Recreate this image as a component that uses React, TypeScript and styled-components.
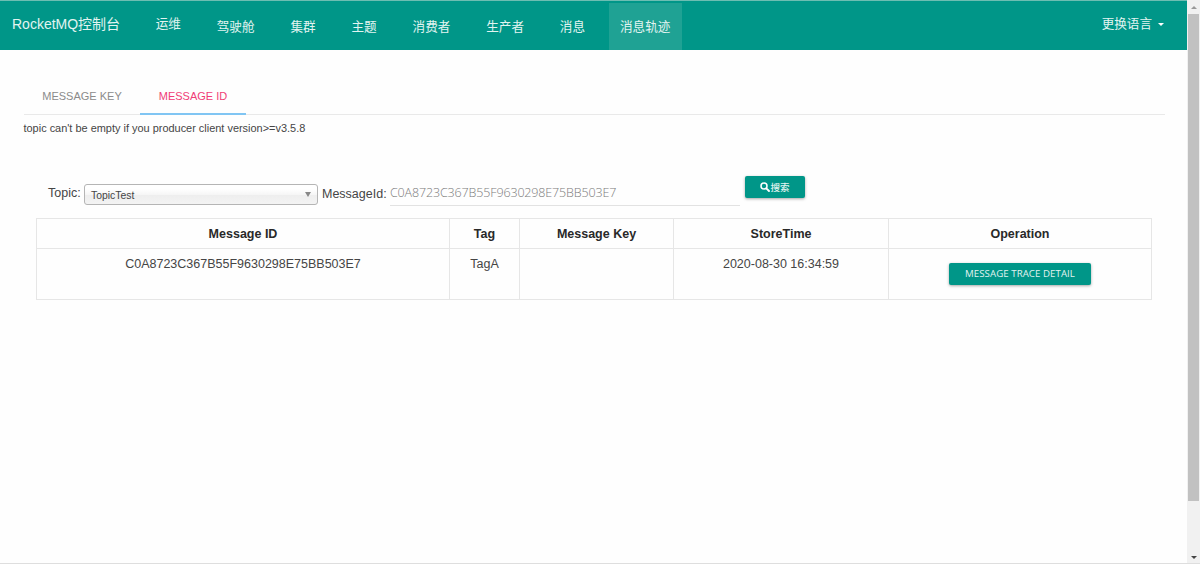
import React from "react";
import styled, { createGlobalStyle, css } from "styled-components";

const teal = "#009688";
const line = "#e6e6e6";

const GlobalStyle = createGlobalStyle`
  *, *::before, *::after { box-sizing: border-box; }
  body {
    margin: 0;
    overflow: hidden;
    background: #fefefe;
    color: #454545;
    font: 12.5px/18px "Liberation Sans", Arial, "Noto Sans CJK SC", sans-serif;
  }
`;

const Window = styled.div`
  display: flex;
  width: 1200px;
  height: 564px;
  border-bottom: 1px solid #dedede;
`;

const Page = styled.div`
  flex: 0 0 1187px;
`;

const Header = styled.header`
  display: flex;
  height: 50px;
  border-top: 1px solid #6dbdb2;
  background: ${teal};
  color: #e2f4f1;
  white-space: nowrap;
`;

const Brand = styled.div`
  width: 144px;
  padding: 13px 0 0 12px;
  font-size: 14px;
  line-height: 20px;
`;

const Nav = styled.nav`
  display: flex;
  gap: 12.5px;
  padding-top: 2px;
`;

const NavItem = styled.a<{ $active?: boolean; $first?: boolean }>`
  height: 47px;
  padding: 15px 11.7px 0;
  font-size: 12.6px;
  line-height: 19px;
  ${(p) =>
    p.$first &&
    css`
      padding-top: 12px;
    `}
  ${(p) =>
    p.$active &&
    css`
      width: 73px;
      background: #1fa294;
      padding-left: 10.8px;
    `}
`;

const Language = styled.div`
  display: flex;
  gap: 6px;
  margin-left: auto;
  padding: 14px 23px 0 0;
  font-size: 12.6px;
  line-height: 19px;
`;

const Caret = styled.i`
  width: 6px;
  height: 3px;
  margin-top: 8px;
  border: 3px solid transparent;
  border-top-color: #fff;
  border-bottom: 0;
`;

const Content = styled.main`
  padding: 27px 22px 0 23px;
`;

const Tabs = styled.div`
  display: flex;
  height: 38px;
  margin-left: 1px;
  border-bottom: 1px solid #e9e9e9;
  font-size: 11px;
`;

const Tab = styled.div<{ $active?: boolean; $width: number }>`
  width: ${(p) => p.$width}px;
  height: 38px;
  padding-top: 10px;
  text-align: center;
  line-height: 18px;
  color: ${(p) => (p.$active ? "#f03d77" : "#8b8b8b")};
  border-bottom: 2px solid ${(p) => (p.$active ? "#80c5f3" : "transparent")};
`;

const Hint = styled.p`
  margin: 5px 0 0;
  padding-left: 0.5px;
  font-size: 10.95px;
  line-height: 16px;
`;

const Form = styled.form`
  display: flex;
  align-items: flex-start;
  height: 42px;
  margin-top: 40px;
  padding-left: 25px;
`;

const Label = styled.label<{ $width: number; $top: number }>`
  width: ${(p) => p.$width}px;
  padding-top: ${(p) => p.$top}px;
  white-space: nowrap;
`;

const Select = styled.div`
  display: flex;
  justify-content: space-between;
  width: 234px;
  height: 21px;
  margin: 8px 4px 0 0;
  padding: 2px 6px 0;
  border: 1px solid #b5b5b5;
  border-radius: 3px;
  background: linear-gradient(#fff 20%, #f6f6f6 50%, #eee 52%, #f3f3f3 100%);
  font-size: 10.4px;
  line-height: 18px;
`;

const SelectArrow = styled.i`
  width: 6px;
  height: 5px;
  margin-top: 5px;
  border: 3px solid transparent;
  border-top: 5px solid #888;
  border-bottom: 0;
`;

const Field = styled.div`
  width: 350px;
  height: 30px;
  padding-top: 7px;
  border-bottom: 1px solid #e2e2e2;
  color: #7c7c7c;
  font: 300 12.5px/19px "Open Sans", "Noto Sans", sans-serif;
  letter-spacing: -0.14px;
`;

const RaisedButton = styled.button`
  display: inline-flex;
  align-items: center;
  justify-content: center;
  height: 22px;
  padding: 0;
  border: 0;
  border-radius: 2px;
  background: ${teal};
  color: #e0f3f0;
  box-shadow: 0 1px 3px rgba(0, 0, 0, 0.35);
`;

const SearchButton = styled(RaisedButton)`
  width: 60px;
  margin-left: 5px;
  font: 500 9.5px/14px "Noto Sans CJK SC", sans-serif;
`;

const TraceButton = styled(RaisedButton)`
  width: 142px;
  font: 500 9.7px/14px "Open Sans", "Noto Sans", sans-serif;
  letter-spacing: 0.05px;
`;

const Table = styled.table`
  width: 1115px;
  margin-left: 13px;
  table-layout: fixed;
  border-collapse: collapse;
  text-align: center;
`;

const HeadCell = styled.th`
  height: 30px;
  padding: 0;
  border: 1px solid ${line};
  color: #292929;
  font-weight: 700;
`;

const Cell = styled.td<{ $action?: boolean }>`
  height: 51px;
  padding: ${(p) => (p.$action ? "14px" : "6px")} 0 0;
  border: 1px solid ${line};
  vertical-align: top;
  line-height: ${(p) => (p.$action ? 0 : "18px")};
`;

const Scrollbar = styled.div`
  display: flex;
  flex-direction: column;
  align-items: center;
  width: 13px;
  padding: 0 1px;
  background: #f1f1f1;
`;

const ScrollArrow = styled.i<{ $down?: boolean }>`
  width: 6px;
  height: 3px;
  margin: ${(p) => (p.$down ? "auto 0 4px" : "6px 0 5px")};
  border: 3px solid transparent;
  ${(p) =>
    p.$down
      ? css`
          border-top-color: #444;
          border-bottom: 0;
        `
      : css`
          border-bottom-color: #999;
          border-top: 0;
        `}
`;

const Thumb = styled.div`
  width: 11px;
  height: 487px;
  background: #c1c1c1;
`;

const SearchIcon = () => (
  <svg width="10" height="10" viewBox="0 0 10 10" fill="none" stroke="#fff">
    <circle cx="4" cy="4" r="3" strokeWidth="1.5" />
    <path d="M6.3 6.3 9 9" strokeWidth="1.9" strokeLinecap="round" />
  </svg>
);

const sections = ["运维", "驾驶舱", "集群", "主题", "消费者", "生产者", "消息", "消息轨迹"];
const columns = [
  { title: "Message ID", width: 413 },
  { title: "Tag", width: 70 },
  { title: "Message Key", width: 154 },
  { title: "StoreTime", width: 215 },
  { title: "Operation", width: 263 },
];
const messageId = "C0A8723C367B55F9630298E75BB503E7";

export default function App() {
  return (
    <Window>
      <GlobalStyle />
      <Page>
        <Header>
          <Brand>RocketMQ控制台</Brand>
          <Nav>
            {sections.map((name, i) => (
              <NavItem key={name} $first={i === 0} $active={i === sections.length - 1}>
                {name}
              </NavItem>
            ))}
          </Nav>
          <Language>
            更换语言
            <Caret />
          </Language>
        </Header>
        <Content>
          <Tabs>
            <Tab $width={116}>MESSAGE KEY</Tab>
            <Tab $width={106} $active>
              MESSAGE ID
            </Tab>
          </Tabs>
          <Hint>topic can't be empty if you producer client version&gt;=v3.5.8</Hint>
          <Form>
            <Label $width={36} $top={8}>Topic:</Label>
            <Select>
              TopicTest
              <SelectArrow />
            </Select>
            <Label $width={68} $top={9}>MessageId:</Label>
            <Field>{messageId}</Field>
            <SearchButton type="button">
              <SearchIcon />
              搜索
            </SearchButton>
          </Form>
          <Table>
            <colgroup>
              {columns.map((c) => (
                <col key={c.title} width={c.width} />
              ))}
            </colgroup>
            <thead>
              <tr>
                {columns.map((c) => (
                  <HeadCell key={c.title}>{c.title}</HeadCell>
                ))}
              </tr>
            </thead>
            <tbody>
              <tr>
                <Cell>{messageId}</Cell>
                <Cell>TagA</Cell>
                <Cell />
                <Cell>2020-08-30 16:34:59</Cell>
                <Cell $action>
                  <TraceButton type="button">MESSAGE TRACE DETAIL</TraceButton>
                </Cell>
              </tr>
            </tbody>
          </Table>
        </Content>
      </Page>
      <Scrollbar>
        <ScrollArrow />
        <Thumb />
        <ScrollArrow $down />
      </Scrollbar>
    </Window>
  );
}
